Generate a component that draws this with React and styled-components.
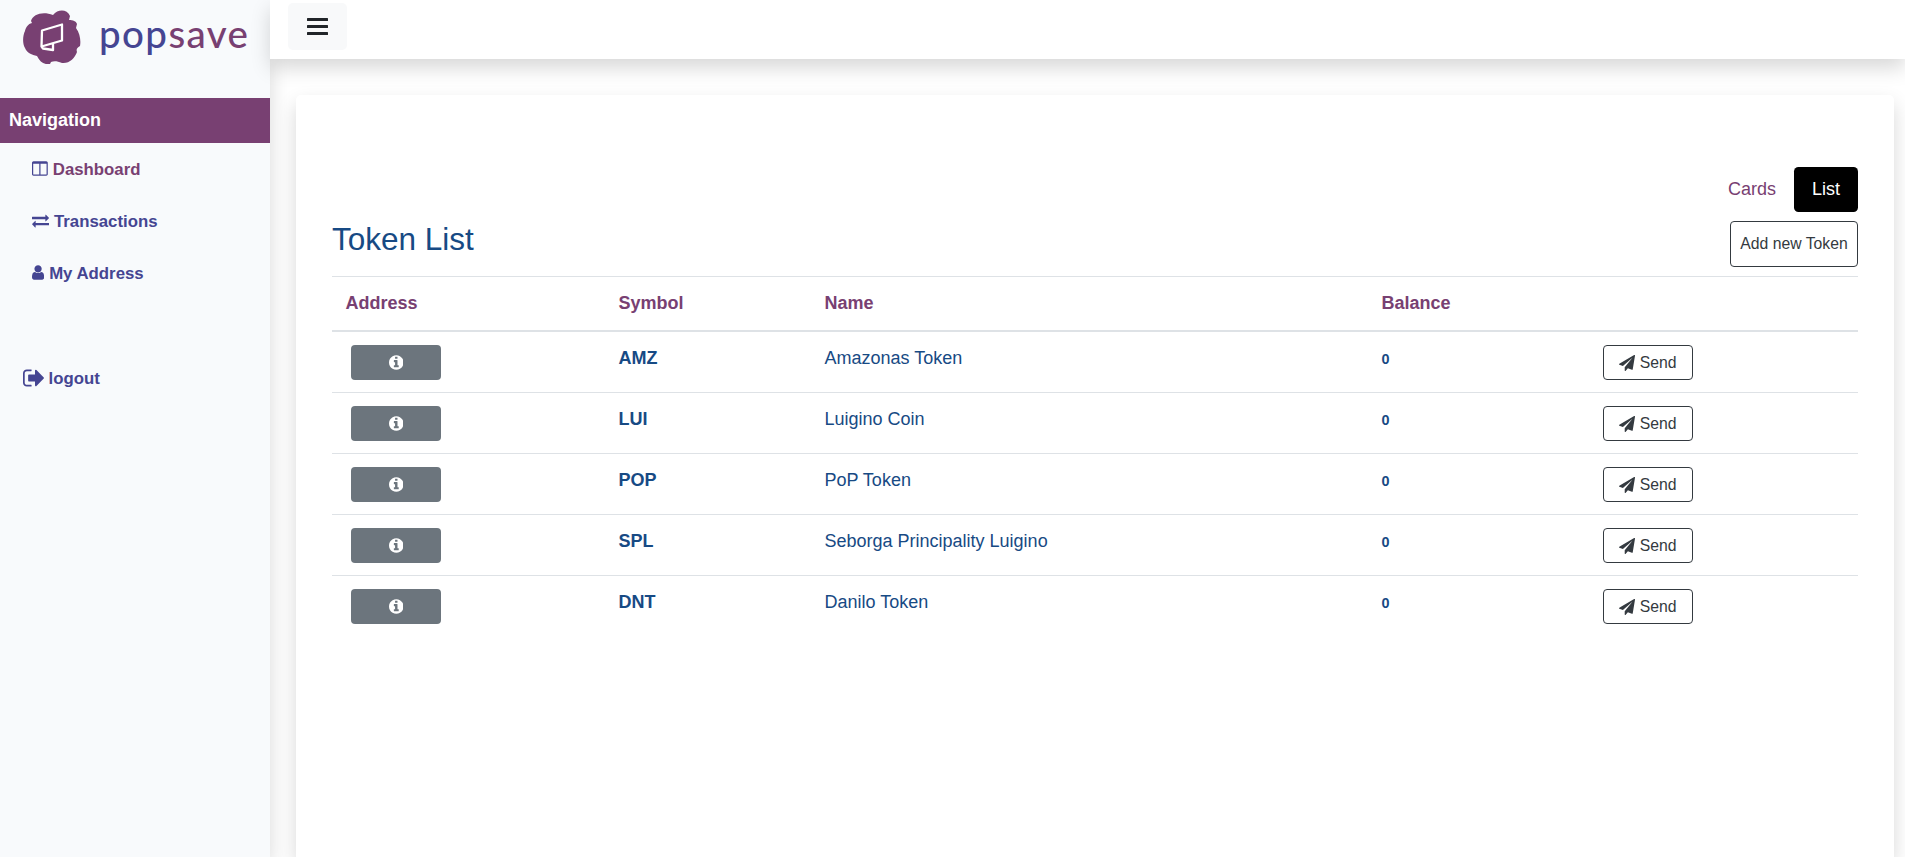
import React from "react";
import styled, { createGlobalStyle } from "styled-components";

const PURPLE = "#784072";
const INDIGO = "#454592";
const BLUE = "#174a84";
const LINE = "#dee2e6";
const SHADOW = "0 9px 20px rgba(0, 0, 0, 0.155)";

const GlobalStyle = createGlobalStyle`
  *, *::before, *::after { box-sizing: border-box; }
  body {
    margin: 0;
    overflow: hidden;
    background: #fff;
    color: #212529;
    font: 18px/27px "Liberation Sans", Arial, sans-serif;
  }
  button { font-family: inherit; }
`;

const Page = styled.div`
  display: flex;
  height: 100vh;
`;

const Sidebar = styled.aside`
  flex: 0 0 270px;
  background: #f8fafc;
  box-shadow: ${SHADOW};
`;

const Brand = styled.a`
  display: flex;
  align-items: flex-start;
  height: 98px;
  padding: 10px 0 0 23px;
`;

const BrandMark = styled.svg`
  width: 58px;
  height: 54px;
`;

const BrandName = styled.span`
  margin: -1px 0 0 18px;
  font: 500 38.5px/48px Lato, sans-serif;
  letter-spacing: 1.4px;
  color: ${INDIGO};
`;

const BrandAccent = styled.span`
  color: ${PURPLE};
`;

const NavHeading = styled.h2`
  margin: 0;
  height: 45px;
  padding: 9px;
  font-size: 18px;
  line-height: 27px;
  color: #fff;
  background: ${PURPLE};
`;

const NavLink = styled.a`
  display: flex;
  align-items: flex-start;
  gap: 5px;
  height: 52px;
  padding: 13px 0 0 ${(p) => p.$indent || 32}px;
  margin-top: ${(p) => p.$space || 0}px;
  font-size: 16.8px;
  font-weight: 700;
  color: ${(p) => (p.$active ? PURPLE : INDIGO)};
`;

const Glyph = styled.svg`
  flex: none;
  height: ${(p) => p.$size}px;
  width: ${(p) => p.$width}px;
  fill: currentColor;

  ${NavLink} & {
    margin-top: ${(p) => (p.$size > 20 ? 0.5 : 4.4)}px;
    fill: ${INDIGO};
  }
`;

const Content = styled.div`
  display: flex;
  flex: 1;
  flex-direction: column;
  min-width: 0;
`;

const Topbar = styled.header`
  position: relative;
  z-index: 1;
  flex: 0 0 59px;
  padding: 3px 18px;
  background: #fff;
  box-shadow: ${SHADOW};
`;

const MenuButton = styled.button`
  display: flex;
  justify-content: center;
  width: 59px;
  height: 47px;
  padding: 15px 0;
  border: 0;
  border-radius: 5px;
  background: #f8f9fa;
`;

const Card = styled.main`
  flex: 1;
  margin: 36px 11px 0 26px;
  padding: 72px 36px 0;
  border-radius: 5px 5px 0 0;
  background: #fff;
  box-shadow: ${SHADOW};
  position: relative;
  z-index: 2;
`;

const Tabs = styled.nav`
  display: flex;
  justify-content: flex-end;
`;

const Tab = styled.a`
  padding: 9px 18px;
  border-radius: 4.5px;
  color: ${(p) => (p.$active ? "#fff" : PURPLE)};
  background: ${(p) => (p.$active ? "#000" : "transparent")};
`;

const TitleRow = styled.div`
  display: flex;
  justify-content: space-between;
  height: 64px;
  padding-top: 9px;
`;

const Title = styled.h1`
  margin: 0;
  font-size: 31.5px;
  font-weight: 400;
  line-height: 37px;
  color: ${BLUE};
`;

const OutlineButton = styled.button`
  display: flex;
  align-items: center;
  justify-content: center;
  gap: 4.5px;
  width: ${(p) => p.$width}px;
  height: ${(p) => p.$height}px;
  padding: 0;
  border: 1px solid #343a40;
  border-radius: 4px;
  font-size: 15.75px;
  color: #343a40;
  background: transparent;
`;

const Table = styled.table`
  width: 100%;
  table-layout: fixed;
  border-spacing: 0;
  border-top: 1px solid ${LINE};
`;

const Col = styled.col`
  width: ${(p) => p.$width};
`;

const Th = styled.th`
  height: 55px;
  padding: 13px 13.5px;
  border-bottom: 2px solid ${LINE};
  text-align: left;
  vertical-align: top;
  color: ${PURPLE};
`;

const Td = styled.td`
  height: 61px;
  padding: ${(p) => (p.$small ? 14 : 13)}px 13.5px 0;
  vertical-align: top;
  font-weight: ${(p) => (p.$bold ? 700 : 400)};
  font-size: ${(p) => (p.$small ? 14.4 : 18)}px;
  color: ${BLUE};
  border-bottom: 1px solid ${LINE};
  tr:last-child > & { border-bottom: 0; }
`;

const ActionTd = styled(Td)`
  padding-left: 19px;
`;

const InfoButton = styled.button`
  display: flex;
  align-items: center;
  justify-content: center;
  width: 90px;
  height: 35px;
  padding: 0;
  border: 0;
  border-radius: 4px;
  color: #fff;
  background: #6c757d;
`;

const glyphs = {
  columns: [1664, "M160 0h608v1152h-640v-1120q0 -13 9.5 -22.5t22.5 -9.5zM1536 32v1120h-640v-1152h608q13 0 22.5 9.5t9.5 22.5zM1664 1248v-1216q0 -66 -47 -113t-113 -47h-1344q-66 0 -113 47t-47 113v1216q0 66 47 113t113 47h1344q66 0 113 -47t47 -113z"],
  exchange: [1792, "M1792 352v-192q0 -13 -9.5 -22.5t-22.5 -9.5h-1376v-192q0 -13 -9.5 -22.5t-22.5 -9.5q-12 0 -24 10l-319 320q-9 9 -9 22q0 14 9 23l320 320q9 9 23 9q13 0 22.5 -9.5t9.5 -22.5v-192h1376q13 0 22.5 -9.5t9.5 -22.5zM1792 896q0 -14 -9 -23l-320 -320q-9 -9 -23 -9q-13 0 -22.5 9.5t-9.5 22.5v192h-1376q-13 0 -22.5 9.5t-9.5 22.5v192q0 13 9.5 22.5t22.5 9.5h1376v192q0 14 9 23t23 9q12 0 24 -10l319 -319q9 -9 9 -23z"],
  user: [1280, "M1280 137q0 -109 -62.5 -187t-150.5 -78h-854q-88 0 -150.5 78t-62.5 187q0 85 8.5 160.5t31.5 152t58.5 131t94 89t134.5 34.5q131 -128 313 -128t313 128q76 0 134.5 -34.5t94 -89t58.5 -131t31.5 -152t8.5 -160.5zM1024 1024q0 -159 -112.5 -271.5t-271.5 -112.5t-271.5 112.5t-112.5 271.5t112.5 271.5t271.5 112.5t271.5 -112.5t112.5 -271.5z"],
  signOut: [1568, "M640 96q0 -4 1 -20t0.5 -26.5t-3 -23.5t-10 -19.5t-20.5 -6.5h-320q-119 0 -203.5 84.5t-84.5 203.5v704q0 119 84.5 203.5t203.5 84.5h320q13 0 22.5 -9.5t9.5 -22.5q0 -4 1 -20t0.5 -26.5t-3 -23.5t-10 -19.5t-20.5 -6.5h-320q-66 0 -113 -47t-47 -113v-704q0 -66 47 -113t113 -47h288h11h13t11.5 -1t11.5 -3t8 -5.5t7 -9t2 -13.5zM1568 640q0 -26 -19 -45l-544 -544q-19 -19 -45 -19t-45 19t-19 45v288h-448q-26 0 -45 19t-19 45v384q0 26 19 45t45 19h448v288q0 26 19 45t45 19t45 -19l544 -544q19 -19 19 -45z"],
  info: [1536, "M1024 160v160q0 14 -9 23t-23 9h-96v512q0 14 -9 23t-23 9h-320q-14 0 -23 -9t-9 -23v-160q0 -14 9 -23t23 -9h96v-320h-96q-14 0 -23 -9t-9 -23v-160q0 -14 9 -23t23 -9h448q14 0 23 9t9 23zM896 1056v160q0 14 -9 23t-23 9h-192q-14 0 -23 -9t-9 -23v-160q0 -14 9 -23t23 -9h192q14 0 23 9t9 23zM1536 640q0 -209 -103 -385.5t-279.5 -279.5t-385.5 -103t-385.5 103t-279.5 279.5t-103 385.5t103 385.5t279.5 279.5t385.5 103t385.5 -103t279.5 -279.5t103 -385.5z"],
  send: [1792, "M1764 1525q33 -24 27 -64l-256 -1536q-5 -29 -32 -45q-14 -8 -31 -8q-11 0 -24 5l-453 185l-242 -295q-18 -23 -49 -23q-13 0 -22 4q-19 7 -30.5 23.5t-11.5 36.5v349l864 1059l-1069 -925l-395 162q-37 14 -40 55q-2 40 32 59l1664 960q15 9 32 9q20 0 36 -11z"],
};

function Icon({ name, size = 17 }) {
  const [advance, d] = glyphs[name];
  return (
    <Glyph $size={size} $width={(size * advance) / 1792} viewBox={`0 -1536 ${advance} 1792`}>
      <path transform="scale(1,-1)" d={d} />
    </Glyph>
  );
}

const tokens = [
  ["AMZ", "Amazonas Token"],
  ["LUI", "Luigino Coin"],
  ["POP", "PoP Token"],
  ["SPL", "Seborga Principality Luigino"],
  ["DNT", "Danilo Token"],
];

export default function App() {
  return (
    <Page>
      <GlobalStyle />
      <Sidebar>
        <Brand>
          <BrandMark viewBox="0 0 58 54">
            <path
              fill={PURPLE}
              d="M8 11C10 4 20 1 30 5C35-1 44-1 47 6L46 10C50 10 53 11 54 14L53 18C57 23 58 31 57 36C54 38 53 39 54 42C52 48 46 54 39 53C34 51 31 51 28 52L27 54C21 55 17 52 14 46C9 45 4 43 2 38C-1 33 0 25 2 21C3 17 5 14 9 13Z"
            />
            <path
              fill="none"
              stroke="#fff"
              strokeWidth="2.3"
              strokeLinejoin="round"
              d="M19 20.5L39 14.5V30.5L18.5 36.5ZM18.5 36.5L20 38.5L30 40V33.5"
            />
          </BrandMark>
          <BrandName>
            pop<BrandAccent>save</BrandAccent>
          </BrandName>
        </Brand>
        <NavHeading>Navigation</NavHeading>
        <NavLink $active>
          <Icon name="columns" />
          Dashboard
        </NavLink>
        <NavLink>
          <Icon name="exchange" />
          Transactions
        </NavLink>
        <NavLink>
          <Icon name="user" />
          My Address
        </NavLink>
        <NavLink $indent={22.5} $space={53}>
          <Icon name="signOut" size={24} />
          logout
        </NavLink>
      </Sidebar>
      <Content>
        <Topbar>
          <MenuButton aria-label="Menu">
            <svg width="21" height="17" fill="#212529">
              <rect width="21" height="3" rx="0.5" />
              <rect y="7" width="21" height="3" rx="0.5" />
              <rect y="14" width="21" height="3" rx="0.5" />
            </svg>
          </MenuButton>
        </Topbar>
        <Card>
          <Tabs>
            <Tab>Cards</Tab>
            <Tab $active>List</Tab>
          </Tabs>
          <TitleRow>
            <Title>Token List</Title>
            <OutlineButton $width={128} $height={46}>
              Add new Token
            </OutlineButton>
          </TitleRow>
          <Table>
            <colgroup>
              <Col $width="273px" />
              <Col $width="206px" />
              <Col $width="557px" />
              <Col $width="216px" />
              <Col $width="auto" />
            </colgroup>
            <thead>
              <tr>
                <Th>Address</Th>
                <Th>Symbol</Th>
                <Th>Name</Th>
                <Th>Balance</Th>
                <Th />
              </tr>
            </thead>
            <tbody>
              {tokens.map(([symbol, name]) => (
                <tr key={symbol}>
                  <ActionTd>
                    <InfoButton aria-label="Info">
                      <Icon name="info" />
                    </InfoButton>
                  </ActionTd>
                  <Td $bold>{symbol}</Td>
                  <Td>{name}</Td>
                  <Td $bold $small>0</Td>
                  <ActionTd>
                    <OutlineButton $width={90} $height={35}>
                      <Icon name="send" size={16} />
                      Send
                    </OutlineButton>
                  </ActionTd>
                </tr>
              ))}
            </tbody>
          </Table>
        </Card>
      </Content>
    </Page>
  );
}
